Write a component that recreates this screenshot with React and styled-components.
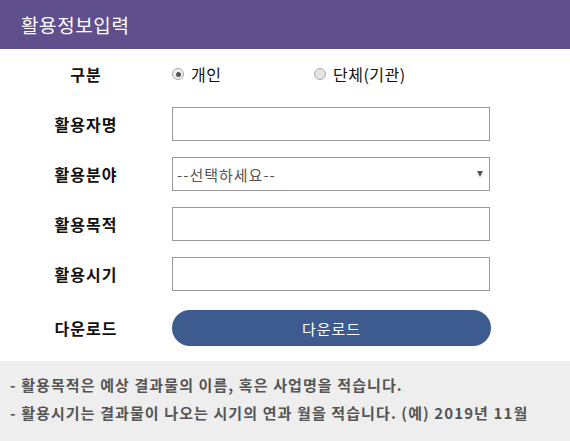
import React from "react";
import styled, { createGlobalStyle } from "styled-components";

const GlobalStyle = createGlobalStyle`
  html, body {
    margin: 0;
    padding: 0;
    background: #fff;
    font-family: "Noto Sans CJK KR", "Noto Sans", sans-serif;
  }
`;

const Wrapper = styled.div`
  width: 570px;
  height: 441px;
  display: flex;
  flex-direction: column;
`;

const Header = styled.div`
  height: 49px;
  background: #5f4f8d;
  color: #fff;
  font-size: 19px;
  letter-spacing: 0.6px;
  display: flex;
  align-items: center;
  padding-left: 21px;
`;

const Form = styled.div`
  padding-top: 8px;
  display: flex;
  flex-direction: column;
  gap: 16px;
  padding-bottom: 15px;
`;

const Row = styled.div`
  display: flex;
  align-items: center;
  height: ${props => props.h || 34}px;
  margin-top: ${props => props.mt || 0}px;
`;

const Label = styled.div`
  width: 172px;
  text-align: center;
  font-size: 16px;
  letter-spacing: 1px;
  font-weight: bold;
  color: #111;
`;

const RadioItem = styled.label`
  display: flex;
  align-items: center;
  gap: 7px;
  width: ${props => props.w}px;
  font-size: 16px;
  letter-spacing: 0.5px;
  color: #111;
`;

const RadioDot = styled.span`
  width: 10px;
  height: 10px;
  border-radius: 50%;
  border: 1px solid #aaa;
  background: ${props => (props.checked ? "#eee" : "#e4e4e4")};
  display: flex;
  align-items: center;
  justify-content: center;
  &::after {
    content: "";
    width: 5px;
    height: 5px;
    border-radius: 50%;
    background: ${props => (props.checked ? "#555" : "transparent")};
  }
`;

const Input = styled.div`
  width: 316px;
  height: 32px;
  border: 1px solid #999;
  box-sizing: content-box;
`;

const Select = styled.div`
  height: 32px;
  border: 1px solid #999;
  display: flex;
  align-items: center;
  justify-content: space-between;
  padding: 0 6px 0 4px;
  box-sizing: content-box;
  width: 306px;
  font-size: 15px;
  letter-spacing: 1px;
  color: #555;
`;

const Arrow = styled.span`
  width: 0;
  height: 0;
  border-left: 3px solid transparent;
  border-right: 3px solid transparent;
  border-top: 6px solid #555;
`;

const Button = styled.div`
  width: 319px;
  height: 36px;
  border-radius: 18px;
  background: #3d5b8f;
  color: #fff;
  font-size: 15px;
  letter-spacing: 1px;
  display: flex;
  align-items: center;
  justify-content: center;
`;

const Notes = styled.div`
  flex: 1;
  background: #eeeeee;
  padding: 14px 0 0 10px;
  display: flex;
  flex-direction: column;
  gap: 9px;
`;

const Note = styled.div`
  font-size: 15px;
  letter-spacing: 1.1px;
  font-weight: bold;
  color: #555;
  line-height: 19px;
  white-space: nowrap;
`;

export default function App() {
  return (
    <Wrapper>
      <GlobalStyle />
      <Header>활용정보입력</Header>
      <Form>
        <Row>
          <Label>구분</Label>
          <RadioItem w={142}>
            <RadioDot checked />
            개인
          </RadioItem>
          <RadioItem>
            <RadioDot />
            단체(기관)
          </RadioItem>
        </Row>
        <Row>
          <Label>활용자명</Label>
          <Input />
        </Row>
        <Row>
          <Label>활용분야</Label>
          <Select>
            --선택하세요--
            <Arrow />
          </Select>
        </Row>
        <Row>
          <Label>활용목적</Label>
          <Input />
        </Row>
        <Row>
          <Label>활용시기</Label>
          <Input />
        </Row>
        <Row h={36} mt={3}>
          <Label>다운로드</Label>
          <Button>다운로드</Button>
        </Row>
      </Form>
      <Notes>
        <Note>- 활용목적은 예상 결과물의 이름, 혹은 사업명을 적습니다.</Note>
        <Note>- 활용시기는 결과물이 나오는 시기의 연과 월을 적습니다. (예) 2019년 11월</Note>
      </Notes>
    </Wrapper>
  );
}
